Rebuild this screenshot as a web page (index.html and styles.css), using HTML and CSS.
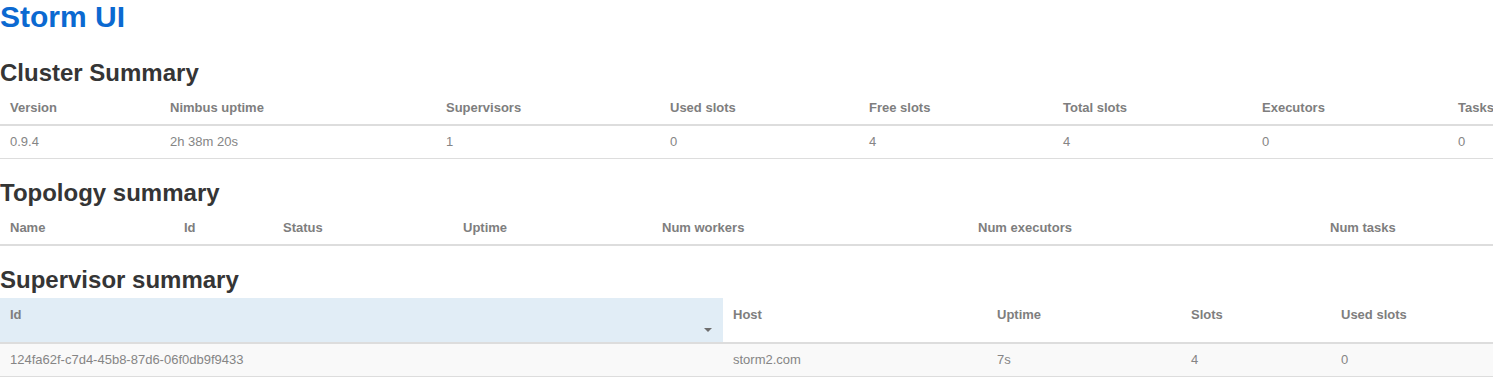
FILE: index.html
```html
<!DOCTYPE html>
<html lang="en">
<head>
<meta charset="utf-8">
<title>Storm UI</title>
<link rel="stylesheet" href="styles.css">
</head>
<body>
<h1 class="title">Storm UI</h1>

<h2 class="section-title first">Cluster Summary</h2>
<table class="grid cluster">
  <thead>
    <tr>
      <th>Version</th><th>Nimbus uptime</th><th>Supervisors</th><th>Used slots</th><th>Free slots</th><th>Total slots</th><th>Executors</th><th>Tasks</th>
    </tr>
  </thead>
  <tbody>
    <tr>
      <td>0.9.4</td><td>2h 38m 20s</td><td>1</td><td>0</td><td>4</td><td>4</td><td>0</td><td>0</td>
    </tr>
  </tbody>
</table>

<h2 class="section-title">Topology summary</h2>
<table class="grid topology">
  <thead>
    <tr>
      <th>Name</th><th>Id</th><th>Status</th><th>Uptime</th><th>Num workers</th><th>Num executors</th><th>Num tasks</th>
    </tr>
  </thead>
  <tbody></tbody>
</table>

<h2 class="section-title">Supervisor summary</h2>
<table class="grid supervisor">
  <thead>
    <tr>
      <th class="sorted">Id<span class="sort-arrow"></span></th><th>Host</th><th>Uptime</th><th>Slots</th><th>Used slots</th>
    </tr>
  </thead>
  <tbody>
    <tr class="striped">
      <td>124fa62f-c7d4-45b8-87d6-06f0db9f9433</td><td>storm2.com</td><td>7s</td><td>4</td><td>0</td>
    </tr>
  </tbody>
</table>
</body>
</html>
```

FILE: styles.css
```css
html, body {
  margin: 0;
  padding: 0;
  background: #ffffff;
}

body {
  font-family: "Liberation Sans", Arial, sans-serif;
  font-size: 13px;
  line-height: 1.42857;
  color: #333333;
}

.title {
  margin: 0 0 27px 0;
  font-size: 30px;
  line-height: 33px;
  font-weight: bold;
  color: #0b69d1;
}

.section-title {
  margin: 21px 0 5px 0;
  font-size: 24px;
  line-height: 26.4px;
  font-weight: bold;
  color: #353535;
}

.section-title.first {
  margin-top: 27px;
}

.grid {
  width: 1493px;
  table-layout: fixed;
  border-collapse: collapse;
  border-spacing: 0;
}

.grid th {
  text-align: left;
  vertical-align: top;
  font-weight: bold;
  color: #7e7e7e;
  padding: 8px 0 6px 10px;
  border-bottom: 2px solid #dddddd;
  white-space: nowrap;
}

.grid td {
  text-align: left;
  color: #858585;
  padding: 7px 0 6.5px 10px;
  border-bottom: 1px solid #dddddd;
  white-space: nowrap;
}

/* Cluster columns */
.cluster th:nth-child(1) { width: 150px; }
.cluster th:nth-child(2) { width: 266px; }
.cluster th:nth-child(3) { width: 214px; }
.cluster th:nth-child(4) { width: 189px; }
.cluster th:nth-child(5) { width: 184px; }
.cluster th:nth-child(6) { width: 189px; }
.cluster th:nth-child(7) { width: 186px; }
.cluster th:nth-child(8) { width: 35px; }

/* Topology columns */
.topology th:nth-child(1) { width: 164px; }
.topology th:nth-child(2) { width: 89px; }
.topology th:nth-child(3) { width: 170px; }
.topology th:nth-child(4) { width: 189px; }
.topology th:nth-child(5) { width: 306px; }
.topology th:nth-child(6) { width: 342px; }
.topology th:nth-child(7) { width: 163px; }

/* Supervisor columns */
.supervisor th:nth-child(1) { width: 713px; }
.supervisor th:nth-child(2) { width: 254px; }
.supervisor th:nth-child(3) { width: 184px; }
.supervisor th:nth-child(4) { width: 140px; }
.supervisor th:nth-child(5) { width: 152px; }

.supervisor th {
  padding-bottom: 17px;
}

.supervisor th.sorted {
  position: relative;
  background: #e1edf6;
}

.sort-arrow {
  position: absolute;
  right: 11px;
  bottom: 10px;
  width: 0;
  height: 0;
  border-left: 4px solid transparent;
  border-right: 4px solid transparent;
  border-top: 4px solid #6e6e6e;
}

.supervisor .striped td {
  background: #f9f9f9;
}
```
